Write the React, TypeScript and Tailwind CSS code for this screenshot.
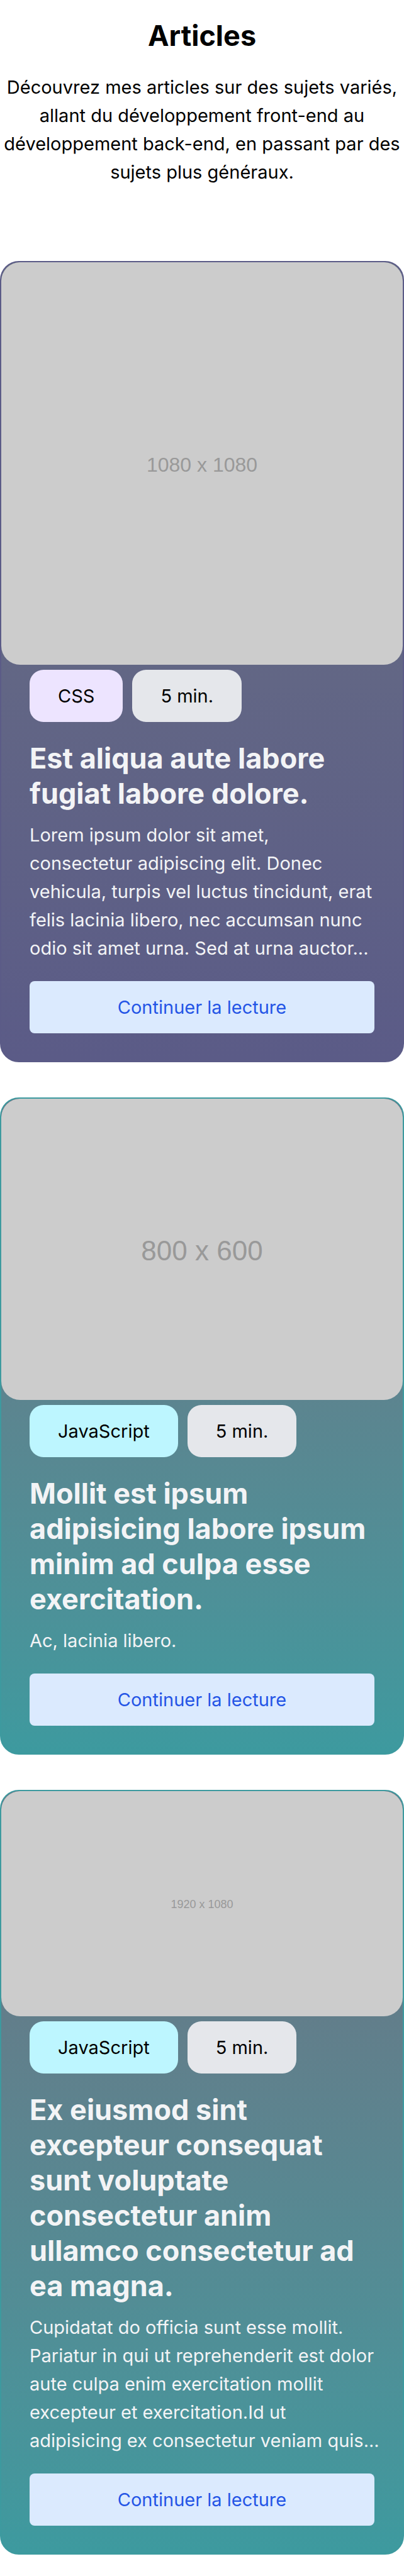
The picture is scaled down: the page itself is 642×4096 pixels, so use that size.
type Article = {
  size: string;
  tag: string;
  duration: string;
  title: string;
  text: string;
  cardClass: string;
  coverClass: string;
  tagClass: string;
};

const articles: Article[] = [
  {
    size: "1080 x 1080",
    tag: "CSS",
    duration: "5 min.",
    title: "Est aliqua aute labore fugiat labore dolore.",
    text: "Lorem ipsum dolor sit amet,\nconsectetur adipiscing elit. Donec\nvehicula, turpis vel luctus tincidunt, erat\nfelis lacinia libero, nec accumsan nunc\nodio sit amet urna. Sed at urna auctor...",
    cardClass: "border-[#5b5b87] to-[#5b5b87]",
    coverClass: "aspect-[638/640] text-[32px]",
    tagClass: "bg-[#ede4ff]",
  },
  {
    size: "800 x 600",
    tag: "JavaScript",
    duration: "5 min.",
    title: "Mollit est ipsum adipisicing labore ipsum minim ad culpa esse exercitation.",
    text: "Ac, lacinia libero.",
    cardClass: "border-[#3d9a9f] to-[#3d9a9f]",
    coverClass: "aspect-[4/3] text-[44px]",
    tagClass: "bg-[#bdf6ff]",
  },
  {
    size: "1920 x 1080",
    tag: "JavaScript",
    duration: "5 min.",
    title: "Ex eiusmod sint excepteur consequat sunt voluptate consectetur anim ullamco consectetur ad ea magna.",
    text: "Cupidatat do officia sunt esse mollit.\nPariatur in qui ut reprehenderit est dolor\naute culpa enim exercitation mollit\nexcepteur et exercitation.Id ut\nadipisicing ex consectetur veniam quis...",
    cardClass: "border-[#3d9a9f] to-[#3d9a9f]",
    coverClass: "aspect-video text-[18px]",
    tagClass: "bg-[#bdf6ff]",
  },
];

function ArticleCard({ article }: { article: Article }) {
  return (
    <article
      className={`overflow-hidden rounded-[30px] border-2 bg-linear-to-b from-gray-500 ${article.cardClass}`}
    >
      <div
        className={`flex w-full items-center justify-center rounded-[30px] bg-[#ccc] pt-1 font-['Liberation_Sans',Arial,sans-serif] text-[#999] ${article.coverClass}`}
      >
        {article.size}
      </div>
      <div className="px-[45px] pt-2 pb-11">
        <div className="flex gap-[15px] text-black">
          <span className={`rounded-[22px] px-[45px] py-[19px] ${article.tagClass}`}>{article.tag}</span>
          <span className="rounded-[22px] bg-gray-200 px-[45px] py-[19px]">{article.duration}</span>
        </div>
        <h2 className="mt-[30px] text-[45px] leading-[56px] font-bold">{article.title}</h2>
        <p className="mt-[15px] -mr-6 whitespace-pre-line">{article.text}</p>
        <a
          href="#"
          className="mt-[30px] block rounded-lg bg-blue-100 py-[19px] text-center text-[#2455e6]"
        >
          Continuer la lecture
        </a>
      </div>
    </article>
  );
}

export default function App() {
  return (
    <main className="bg-white pt-[29px] pb-8 font-['Inter',sans-serif] text-[29px] leading-[45px] text-black">
      <header className="text-center">
        <h1 className="text-[45px] leading-[56px] font-bold">Articles</h1>
        <p className="mt-[31px]">
          Découvrez mes articles sur des sujets variés, allant du développement front-end au développement
          back-end, en passant par des sujets plus généraux.
        </p>
      </header>
      <section className="mt-[119px] flex flex-col gap-14 text-gray-100">
        {articles.map((article) => (
          <ArticleCard key={article.size} article={article} />
        ))}
      </section>
    </main>
  );
}
